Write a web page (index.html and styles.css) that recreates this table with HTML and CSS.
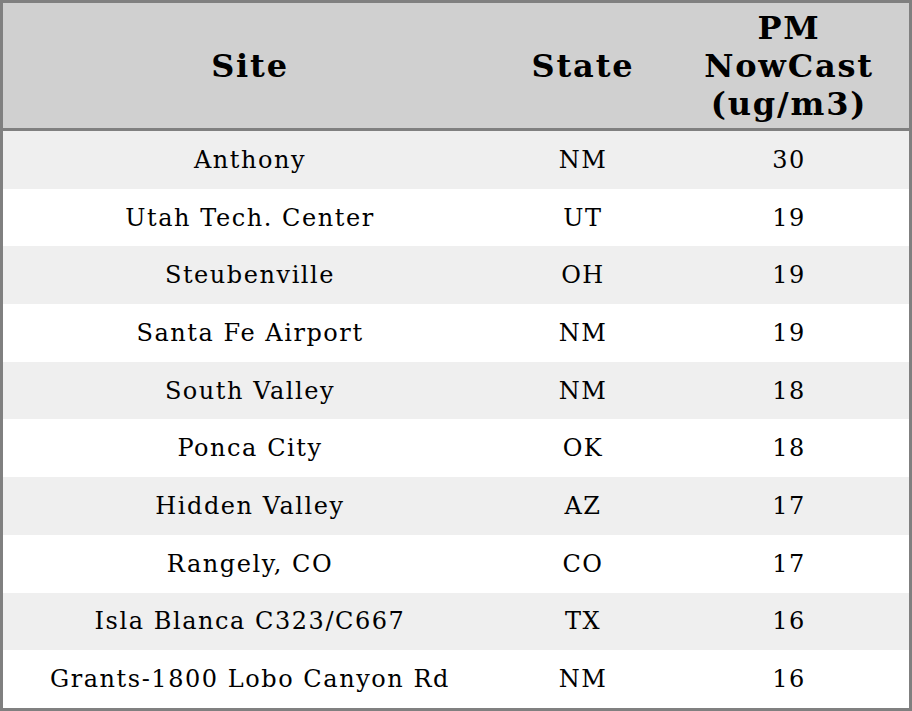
FILE: index.html
```html
<!DOCTYPE html>
<html>
<head>
<meta charset="utf-8">
<link rel="stylesheet" href="styles.css">
</head>
<body>
<table class="aq">
  <colgroup>
    <col class="c-site">
    <col class="c-state">
    <col class="c-pm">
  </colgroup>
  <thead>
    <tr><th>Site</th><th>State</th><th>PM<br>NowCast<br>(ug/m3)</th></tr>
  </thead>
  <tbody>
    <tr><td>Anthony</td><td>NM</td><td>30</td></tr>
    <tr><td>Utah Tech. Center</td><td>UT</td><td>19</td></tr>
    <tr><td>Steubenville</td><td>OH</td><td>19</td></tr>
    <tr><td>Santa Fe Airport</td><td>NM</td><td>19</td></tr>
    <tr><td>South Valley</td><td>NM</td><td>18</td></tr>
    <tr><td>Ponca City</td><td>OK</td><td>18</td></tr>
    <tr><td>Hidden Valley</td><td>AZ</td><td>17</td></tr>
    <tr><td>Rangely, CO</td><td>CO</td><td>17</td></tr>
    <tr><td>Isla Blanca C323/C667</td><td>TX</td><td>16</td></tr>
    <tr><td>Grants-1800 Lobo Canyon Rd</td><td>NM</td><td>16</td></tr>
  </tbody>
</table>
</body>
</html>
```
FILE: styles.css
```css
html, body {
  margin: 0;
  padding: 0;
  background: #ffffff;
}
.aq {
  width: 912px;
  height: 711px;
  border-collapse: separate;
  border-spacing: 0;
  border: 3px solid #808080;
  font-family: "DejaVu Serif", serif;
  color: #000;
  table-layout: fixed;
}
.c-site { width: 494px; }
.c-state { width: 172px; }
.c-pm { width: 240px; }
.aq th {
  background: #d0d0d0;
  font-size: 32px;
  font-weight: bold;
  letter-spacing: 1.8px;
  height: 128px;
  padding: 0;
  text-align: center;
  vertical-align: middle;
  border-bottom: 3px solid #808080;
  box-sizing: border-box;
}
.aq td {
  font-size: 24px;
  letter-spacing: 1.55px;
  text-align: center;
  vertical-align: middle;
  padding: 0;
}
.aq tbody tr:nth-child(odd) td {
  background: #efefef;
}
.aq tbody tr:nth-child(even) td {
  background: #ffffff;
}
```
